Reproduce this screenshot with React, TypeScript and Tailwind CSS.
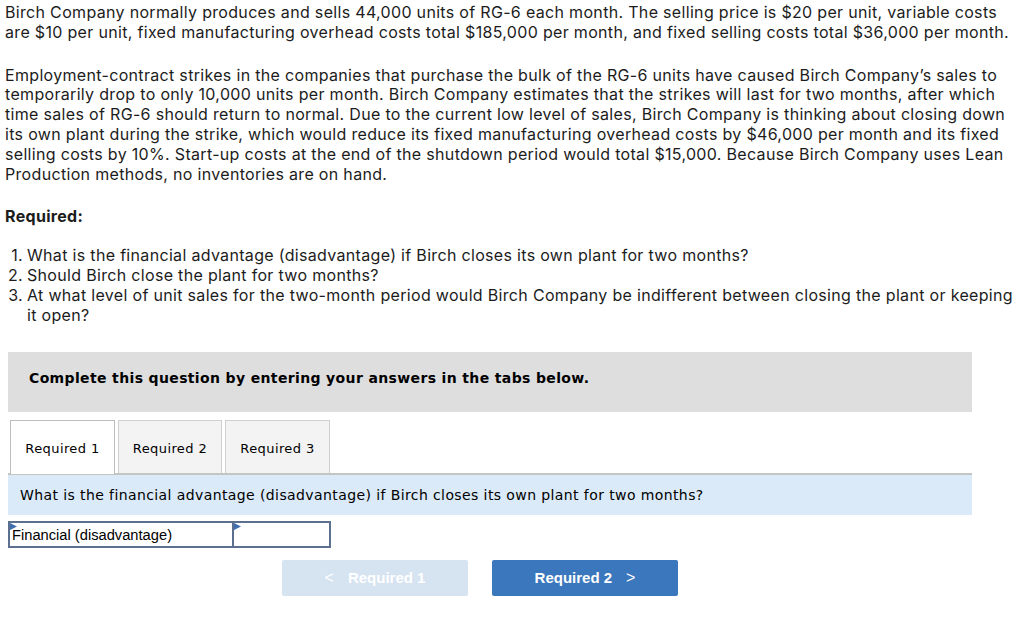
import React from "react";

const body = { fontFamily: 'Inter, "Open Sans", sans-serif' };
const verdana = { fontFamily: '"DejaVu Sans", Verdana, sans-serif' };
const arial = { fontFamily: '"Liberation Sans", Arial, sans-serif' };

function Corner() {
  return (
    <svg className="absolute left-0 top-0" width="7" height="7" viewBox="0 0 7 7">
      <polygon points="0,0 7,3.5 0,7" fill="#3f6fb0" />
    </svg>
  );
}

export default function App() {
  return (
    <div className="w-[1024px] h-[624px] bg-white text-[#1c1c1c] overflow-hidden">
      <div className="pl-[5px] pt-[3px] text-[16px] tracking-[0.32px] leading-[19.8px] whitespace-nowrap" style={body}>
        <p>
          Birch Company normally produces and sells 44,000 units of RG-6 each month. The selling price is $20 per unit, variable costs
          <br />
          are $10 per unit, fixed manufacturing overhead costs total $185,000 per month, and fixed selling costs total $36,000 per month.
        </p>
        <p className="mt-[23px]">
          Employment-contract strikes in the companies that purchase the bulk of the RG-6 units have caused Birch Company’s sales to
          <br />
          temporarily drop to only 10,000 units per month. Birch Company estimates that the strikes will last for two months, after which
          <br />
          time sales of RG-6 should return to normal. Due to the current low level of sales, Birch Company is thinking about closing down
          <br />
          its own plant during the strike, which would reduce its fixed manufacturing overhead costs by $46,000 per month and its fixed
          <br />
          selling costs by 10%. Start-up costs at the end of the shutdown period would total $15,000. Because Birch Company uses Lean
          <br />
          Production methods, no inventories are on hand.
        </p>
        <p className="mt-[23px] font-bold">Required:</p>
        <ol className="mt-[19px]">
          <li className="flex">
            <span className="w-[22px] text-right pr-[4px]">1.</span>
            <span>What is the financial advantage (disadvantage) if Birch closes its own plant for two months?</span>
          </li>
          <li className="flex">
            <span className="w-[22px] text-right pr-[4px]">2.</span>
            <span>Should Birch close the plant for two months?</span>
          </li>
          <li className="flex">
            <span className="w-[22px] text-right pr-[4px]">3.</span>
            <span>
              At what level of unit sales for the two-month period would Birch Company be indifferent between closing the plant or keeping
              <br />
              it open?
            </span>
          </li>
        </ol>
      </div>

      <div className="ml-[8px] w-[964px] mt-[27px]">
        <div className="h-[60px] bg-[#dedede] flex items-center pl-[21px] pb-[8px]">
          <span className="text-[14px] tracking-[0.36px] font-bold text-black" style={verdana}>
            Complete this question by entering your answers in the tabs below.
          </span>
        </div>

        <div className="mt-[8px] flex gap-[3px] pl-[2px] border-b-2 border-[#c4c4c4]">
          <div className="w-[105px] h-[54px] -mb-[2px] pt-[2px] bg-white border border-b-0 border-[#bdbdbd] flex items-center justify-center text-[13px] tracking-[0.4px] text-black" style={verdana}>
            Required 1
          </div>
          <div className="w-[104px] h-[53px] pt-[2px] bg-[#f3f3f3] border border-b-0 border-[#cfcfcf] flex items-center justify-center text-[13px] tracking-[0.4px] text-black" style={verdana}>
            Required 2
          </div>
          <div className="w-[105px] h-[53px] pt-[2px] bg-[#f3f3f3] border border-b-0 border-[#cfcfcf] flex items-center justify-center text-[13px] tracking-[0.4px] text-black" style={verdana}>
            Required 3
          </div>
        </div>

        <div className="h-[40px] bg-[#daeaf8] flex items-center pl-[12px]">
          <span className="text-[14px] tracking-[0.4px] text-black" style={verdana}>
            What is the financial advantage (disadvantage) if Birch closes its own plant for two months?
          </span>
        </div>

        <div className="mt-[6px] flex">
          <div className="relative w-[226px] h-[27px] border-2 border-[#5b6f8e] flex items-center pl-[2px] text-[14.7px] text-black" style={arial}>
            <Corner />
            Financial (disadvantage)
          </div>
          <div className="relative w-[97px] h-[27px] border-2 border-l-0 border-[#5b6f8e]">
            <Corner />
          </div>
        </div>

        <div className="mt-[12px] flex gap-[24px] pl-[274px]">
          <button className="w-[186px] h-[36px] rounded-[2px] bg-[#d6e3f1] text-white font-bold text-[15px] flex items-center justify-center gap-[14px]" style={arial}>
            <span className="font-normal text-[16px]">&lt;</span>
            <span>Required 1</span>
          </button>
          <button className="w-[186px] h-[36px] rounded-[2px] bg-[#3b77bd] text-white font-bold text-[15px] flex items-center justify-center gap-[14px]" style={arial}>
            <span>Required 2</span>
            <span className="font-normal text-[16px]">&gt;</span>
          </button>
        </div>
      </div>
    </div>
  );
}
